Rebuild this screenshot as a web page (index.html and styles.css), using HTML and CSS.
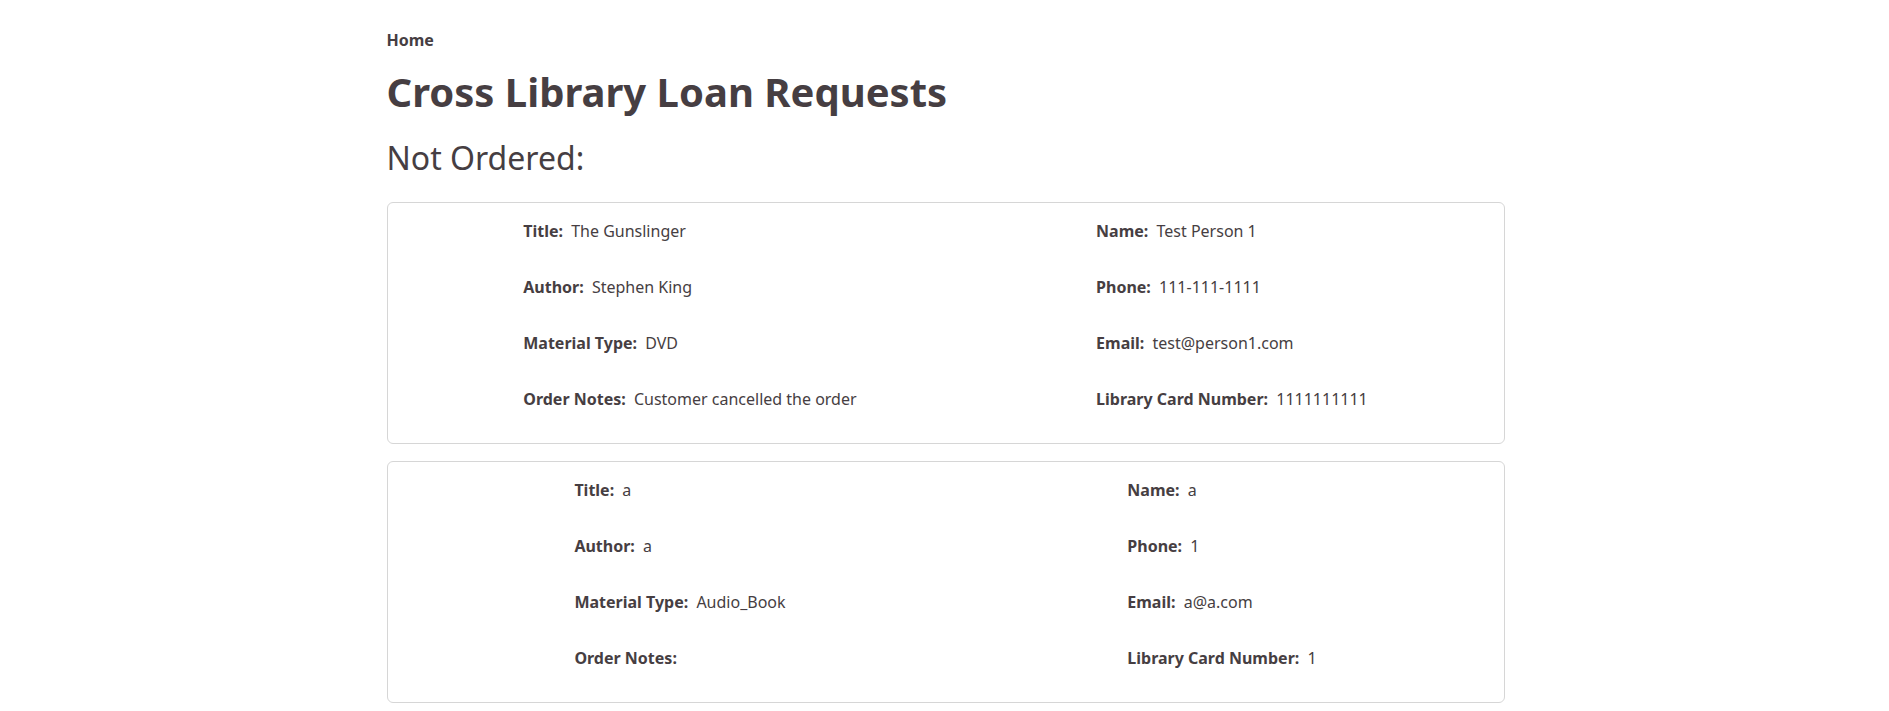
FILE: index.html
```html
<!DOCTYPE html>
<html lang="en">
<head>
<meta charset="utf-8">
<title>Cross Library Loan Requests</title>
<link rel="stylesheet" href="styles.css">
</head>
<body>
<main class="container">
  <nav class="crumbs"><a class="crumb" href="#">Home</a></nav>
  <h1 class="page-title">Cross Library Loan Requests</h1>
  <h2 class="section-title">Not Ordered:</h2>

  <section class="card">
    <div class="col">
      <div class="field"><span class="label">Title:</span> <span class="value">The Gunslinger</span></div>
      <div class="field"><span class="label">Author:</span> <span class="value">Stephen King</span></div>
      <div class="field"><span class="label">Material Type:</span> <span class="value">DVD</span></div>
      <div class="field"><span class="label">Order Notes:</span> <span class="value">Customer cancelled the order</span></div>
    </div>
    <div class="col">
      <div class="field"><span class="label">Name:</span> <span class="value">Test Person 1</span></div>
      <div class="field"><span class="label">Phone:</span> <span class="value">111-111-1111</span></div>
      <div class="field"><span class="label">Email:</span> <span class="value">test@person1.com</span></div>
      <div class="field"><span class="label">Library Card Number:</span> <span class="value">1111111111</span></div>
    </div>
  </section>

  <section class="card">
    <div class="col">
      <div class="field"><span class="label">Title:</span> <span class="value">a</span></div>
      <div class="field"><span class="label">Author:</span> <span class="value">a</span></div>
      <div class="field"><span class="label">Material Type:</span> <span class="value">Audio_Book</span></div>
      <div class="field"><span class="label">Order Notes:</span> <span class="value"></span></div>
    </div>
    <div class="col">
      <div class="field"><span class="label">Name:</span> <span class="value">a</span></div>
      <div class="field"><span class="label">Phone:</span> <span class="value">1</span></div>
      <div class="field"><span class="label">Email:</span> <span class="value">a@a.com</span></div>
      <div class="field"><span class="label">Library Card Number:</span> <span class="value">1</span></div>
    </div>
  </section>
</main>
</body>
</html>
```

FILE: styles.css
```css
* { box-sizing: border-box; }

html, body {
  margin: 0;
  padding: 0;
  background: #ffffff;
}

body {
  font-family: "Noto Sans", "Open Sans", "Liberation Sans", sans-serif;
  font-size: 16px;
  line-height: 24px;
  color: #463e42;
  padding-left: 2px;
}

.container {
  width: 1118px;
  margin: 0 auto;
  padding-top: 28px;
}

.crumbs {
  margin-bottom: 16px;
}

.crumb {
  font-weight: 700;
  color: #463e42;
  text-decoration: none;
}

.page-title {
  font-size: 40px;
  line-height: 48px;
  font-weight: 700;
  margin: 0 0 23px;
}

.section-title {
  font-size: 32px;
  line-height: 38px;
  font-weight: 400;
  margin: 0 0 25px;
}

.card {
  display: flex;
  justify-content: space-around;
  border: 1px solid #d6d6d6;
  border-radius: 6px;
  padding: 16px 16px 32px;
  margin-bottom: 17px;
}

.col {
  display: flex;
  flex-direction: column;
  gap: 32px;
}

.field {
  white-space: nowrap;
}

.label {
  font-weight: 700;
  margin-right: 4px;
}
```
